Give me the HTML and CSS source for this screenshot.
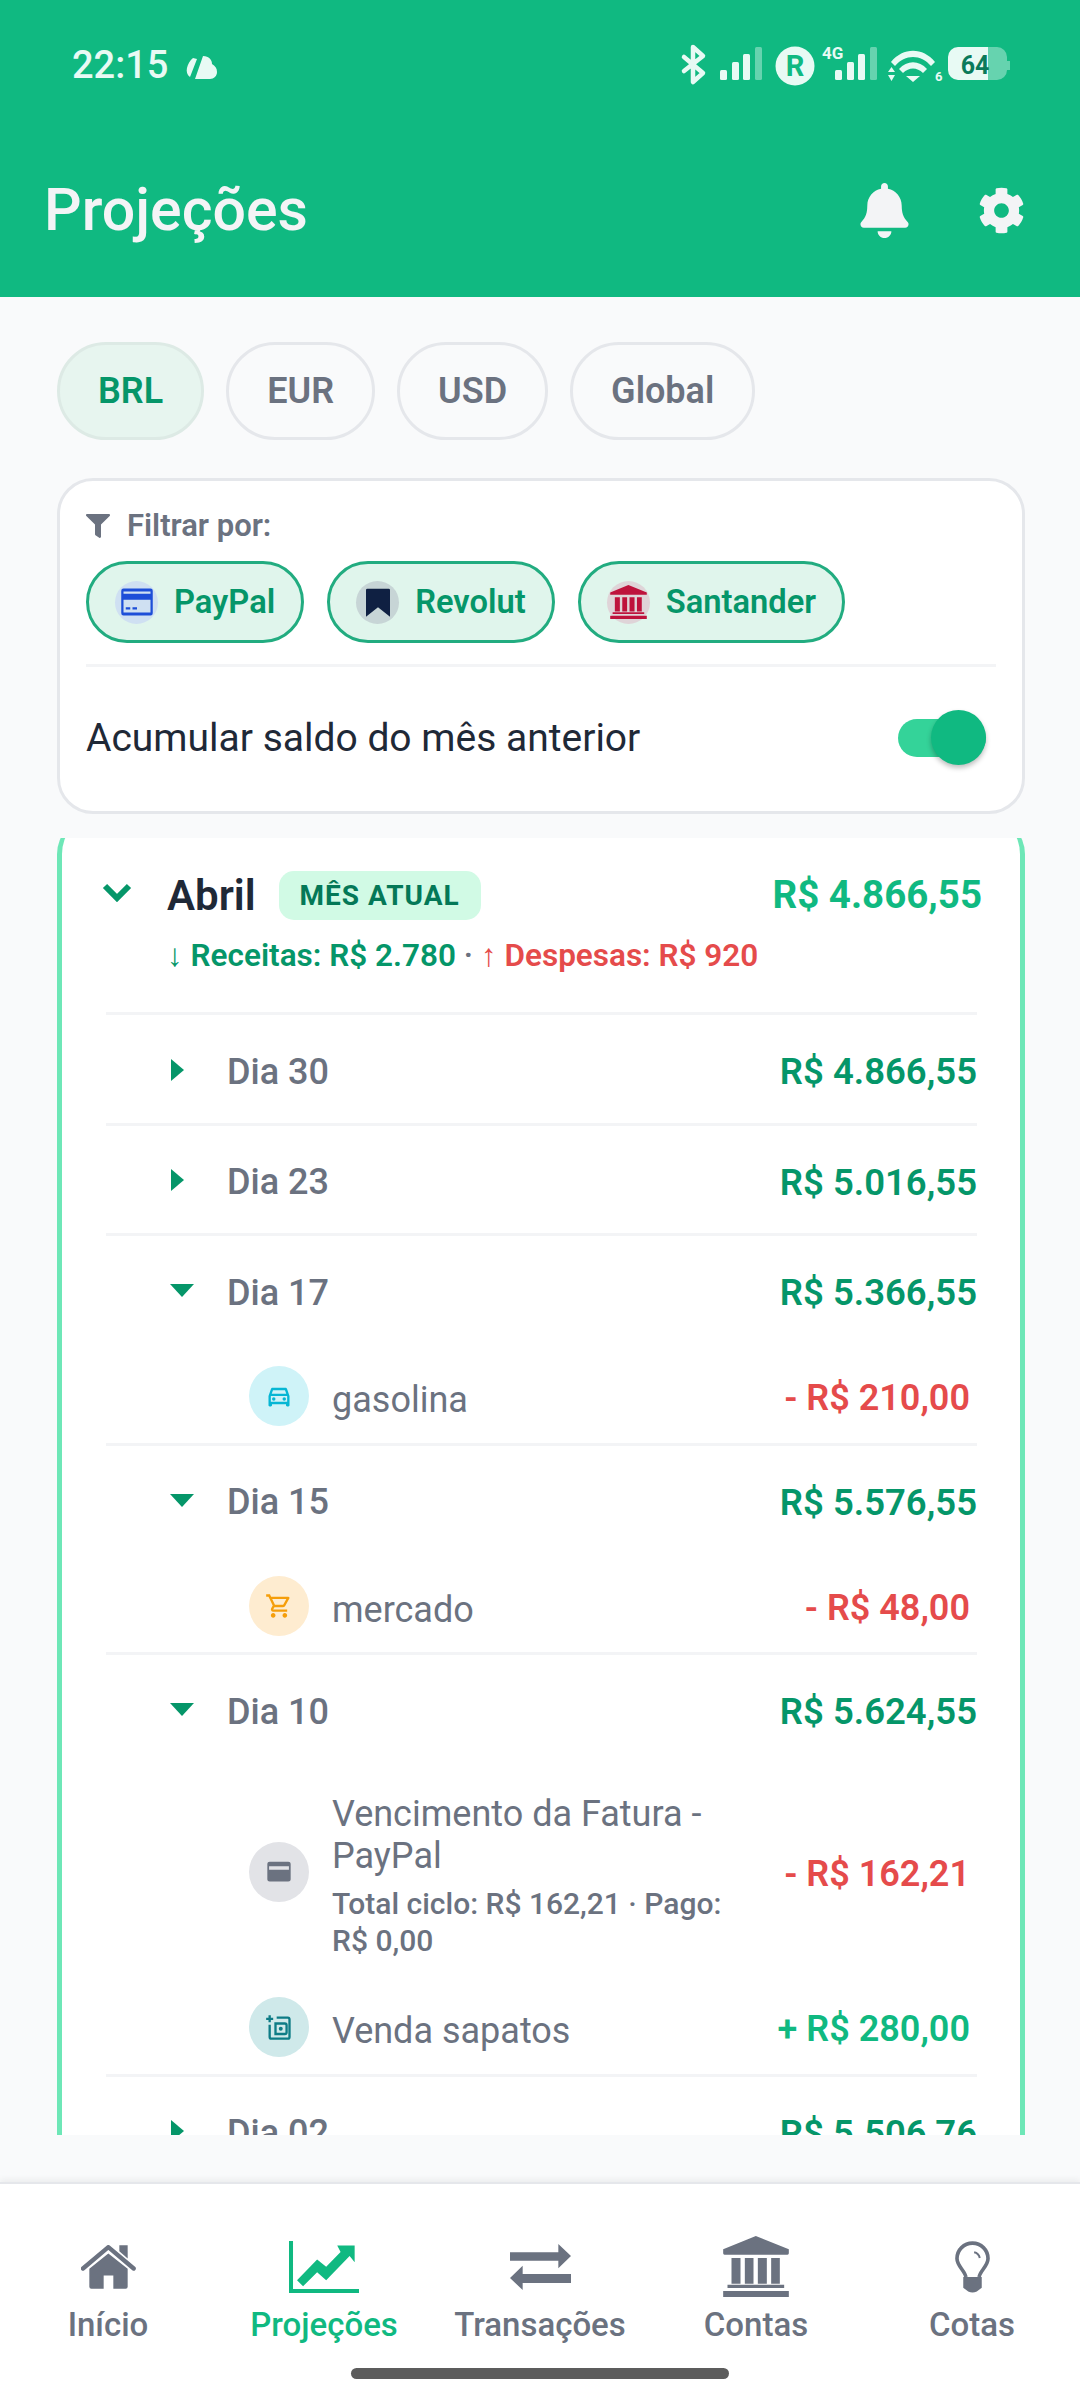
FILE: index.html
```html
<!DOCTYPE html>
<html lang="pt-BR">
<head>
<meta charset="utf-8">
<title>Projeções</title>
<link rel="stylesheet" href="styles.css">
</head>
<body>
<div class="app">
  <header class="header">
    <div class="status">
      <div class="status-left">
        <span class="clock">22:15</span>
        <svg class="weather" viewBox="0 0 33 23"><path d="M9 2 L13 3 L6 21 C0 17 3 7 9 2Z M19 0 C25 0 28 4 28 8 C31 10 33 12 33 16 C33 20 30 23 26 23 L11 23 Z" fill="#E8FAF4"/></svg>
      </div>
      <svg class="status-icons" viewBox="0 0 340 50">
        <path d="M9 17 L28 33 L18 42 L18 7 L28 16 L9 31" fill="none" stroke="#E8FAF4" stroke-width="4.5" stroke-linecap="round" stroke-linejoin="round"/>
        <g fill="#E8FAF4">
          <rect x="45" y="30" width="7" height="10" rx="1.5"/><rect x="57" y="22" width="7" height="18" rx="1.5"/><rect x="68" y="14" width="7" height="26" rx="1.5"/>
          <rect x="80" y="7" width="7" height="33" rx="1.5" opacity=".4"/>
          <circle cx="120" cy="26" r="19.5"/>
          <rect x="160" y="30" width="7" height="10" rx="1.5"/><rect x="172" y="22" width="7" height="18" rx="1.5"/><rect x="183" y="14" width="7" height="26" rx="1.5"/>
          <rect x="195" y="7" width="7" height="33" rx="1.5" opacity=".4"/>
          <path d="M216 22 C228 7 248 7 260 22 L256 26 C246 14 230 14 220 26Z M224 29 C232 20 244 20 252 29 L248 33 C242 27 234 27 228 33Z M231 36 L245 36 L238 42Z"/>
          <path d="M213 32 L220 32 L216.500 27Z M213 35 L220 35 L216.500 41Z"/>
          <path d="M273 17 a10 10 0 0 1 10 -10 h30 v33 h-30 a10 10 0 0 1 -10 -10Z"/>
          <path d="M313 7 h9 a10 10 0 0 1 10 10 v4 h3 v9 h-3 v0 a10 10 0 0 1 -10 10 h-9Z" opacity=".4"/>
        </g>
        <text class="st-r" x="120" y="36">R</text>
        <text class="st-4g" x="147" y="19">4G</text>
        <text class="st-6" x="260" y="41">6</text>
        <text class="st-bat" x="300" y="34">64</text>
      </svg>
    </div>
    <div class="titlebar">
      <h1 class="title">Projeções</h1>
      <div class="title-actions">
        <svg class="bell" viewBox="0 0 448 512"><path d="M224 512c35.320 0 63.970-28.650 63.970-64H160.030c0 35.350 28.650 64 63.970 64zm215.390-149.710c-19.320-20.760-55.470-51.990-55.470-154.290 0-77.700-54.480-139.900-127.940-155.160V32c0-17.670-14.320-32-31.980-32s-31.980 14.330-31.980 32v20.840C118.560 68.100 64.080 130.300 64.080 208c0 102.300-36.150 133.530-55.470 154.290-6 6.450-8.660 14.160-8.610 21.710.11 16.400 12.980 32 32.100 32h383.800c19.120 0 32-15.600 32.100-32 .05-7.550-2.610-15.270-8.610-21.710z"/></svg>
        <svg class="gear" viewBox="0 0 512 512"><path d="M487.400 315.700l-42.600-24.600c4.300-23.200 4.300-47 0-70.200l42.600-24.600c4.900-2.800 7.100-8.600 5.500-14-11.100-35.600-30-67.800-54.700-94.600-3.800-4.100-10-5.100-14.800-2.300L380.800 110c-17.900-15.400-38.500-27.300-60.800-35.100V25.800c0-5.600-3.900-10.500-9.400-11.700-36.700-8.200-74.300-7.800-109.200 0-5.500 1.200-9.400 6.100-9.400 11.700V75c-22.200 7.900-42.800 19.800-60.800 35.100L88.700 85.500c-4.900-2.800-11-1.900-14.800 2.300-24.700 26.700-43.600 58.900-54.700 94.600-1.700 5.400.6 11.200 5.500 14L67.300 221c-4.300 23.200-4.300 47 0 70.200l-42.600 24.600c-4.900 2.800-7.100 8.600-5.500 14 11.100 35.600 30 67.800 54.700 94.600 3.800 4.100 10 5.100 14.800 2.300l42.600-24.600c17.900 15.400 38.500 27.300 60.800 35.100v49.200c0 5.600 3.900 10.500 9.400 11.700 36.700 8.200 74.300 7.800 109.200 0 5.500-1.200 9.400-6.100 9.400-11.700v-49.200c22.200-7.900 42.800-19.800 60.800-35.100l42.600 24.600c4.900 2.800 11 1.900 14.800-2.300 24.700-26.700 43.600-58.900 54.700-94.600 1.500-5.500-.7-11.300-5.600-14.100zM256 336c-44.100 0-80-35.900-80-80s35.900-80 80-80 80 35.900 80 80-35.900 80-80 80z"/></svg>
      </div>
    </div>
  </header>

  <main class="main">
    <div class="pills">
      <button class="pill pill-active">BRL</button>
      <button class="pill">EUR</button>
      <button class="pill">USD</button>
      <button class="pill">Global</button>
    </div>

    <section class="filter-card">
      <div class="filter-label">
        <svg class="filter-icon" viewBox="0 0 512 512"><path d="M487.976 0H24.028C2.710 0-8.047 25.866 7.058 40.971L192 225.941V432c0 7.831 3.821 15.170 10.237 19.662l80 55.980C298.020 518.690 320 507.493 320 487.980V225.941l184.947-184.970C520.021 25.896 509.338 0 487.976 0z"/></svg>
        <span>Filtrar por:</span>
      </div>
      <div class="chips">
        <div class="chip">
          <span class="chip-icon chip-paypal"><svg class="chip-svg-card" viewBox="0 0 24 24"><path fill-rule="evenodd" fill="#1D4ED8" d="M3 3h18a1.500 1.500 0 0 1 1.500 1.500v15A1.500 1.500 0 0 1 21 21H3a1.500 1.500 0 0 1-1.500-1.500v-15A1.500 1.500 0 0 1 3 3zM3 5v1.500h18V5zM3 10.500V19h18v-8.500zM4.500 15.500h3v1.500h-3zM9 15.500h3v1.500H9z"/></svg></span>
          <span>PayPal</span>
        </div>
        <div class="chip">
          <span class="chip-icon chip-revolut"><svg class="chip-svg" viewBox="0 0 24 24"><path fill="#0F2042" d="M4 2h16a1 1 0 0 1 1 1v20l-9-7-9 7V3a1 1 0 0 1 1-1z"/></svg></span>
          <span>Revolut</span>
        </div>
        <div class="chip">
          <span class="chip-icon chip-santander"><svg class="chip-svg-bank" viewBox="0 0 197 183"><path fill="#BE123C" d="M0 40 98 0l99 40v12H0zM25 66h27v77H25zM65 66h26v77H65zM104 66h27v77h-27zM144 66h26v77h-26zM13 146h170v10H13zM0 165h197v18H0z"/></svg></span>
          <span>Santander</span>
        </div>
      </div>
      <div class="filter-divider"></div>
      <div class="toggle-row">
        <span class="toggle-label">Acumular saldo do mês anterior</span>
        <span class="toggle"><span class="toggle-thumb"></span></span>
      </div>
    </section>

    <div class="scroller">
      <section class="month">
        <div class="month-head">
          <svg class="chevron" viewBox="0 0 30 19"><path d="M3 3 L15 15 L27 3" fill="none" stroke="#059669" stroke-width="6"/></svg>
          <span class="month-name">Abril</span>
          <span class="badge">MÊS ATUAL</span>
          <span class="month-total">R$ 4.866,55</span>
        </div>
        <div class="month-sub"><span class="in">↓ Receitas: R$ 2.780</span> <span class="dot">·</span> <span class="out">↑ Despesas: R$ 920</span></div>

        <div class="day">
          <div class="day-head"><span class="caret-box"><i class="caret-right"></i></span><span class="day-name">Dia 30</span><span class="day-total">R$ 4.866,55</span></div>
        </div>
        <div class="day">
          <div class="day-head"><span class="caret-box"><i class="caret-right"></i></span><span class="day-name">Dia 23</span><span class="day-total">R$ 5.016,55</span></div>
        </div>
        <div class="day">
          <div class="day-head"><span class="caret-box"><i class="caret-down"></i></span><span class="day-name">Dia 17</span><span class="day-total">R$ 5.366,55</span></div>
          <div class="tx">
            <span class="tx-icon tx-car"><svg class="tx-svg" viewBox="0 0 24 24"><path fill="#06B6D4" d="M18.920 6.010C18.720 5.420 18.160 5 17.500 5h-11c-.66 0-1.210.42-1.420 1.010L3 12v8c0 .55.45 1 1 1h1c.55 0 1-.45 1-1v-1h12v1c0 .55.45 1 1 1h1c.55 0 1-.45 1-1v-8l-2.080-5.990zM6.850 7h10.290l1.080 3.110H5.770L6.850 7zM19 17H5v-5h14v5z"/><circle fill="#06B6D4" cx="7.500" cy="14.500" r="1.500"/><circle fill="#06B6D4" cx="16.500" cy="14.500" r="1.500"/></svg></span>
            <div class="tx-text"><div class="tx-name">gasolina</div></div>
            <span class="tx-amount neg">- R$ 210,00</span>
          </div>
        </div>
        <div class="day">
          <div class="day-head"><span class="caret-box"><i class="caret-down"></i></span><span class="day-name">Dia 15</span><span class="day-total">R$ 5.576,55</span></div>
          <div class="tx">
            <span class="tx-icon tx-cart"><svg class="tx-svg" viewBox="0 0 24 24"><path fill="#F59E0B" d="M15.550 13c.75 0 1.410-.41 1.750-1.030l3.580-6.490c.37-.66-.11-1.480-.87-1.480H5.210l-.94-2H1v2h2l3.600 7.590-1.350 2.440C4.520 15.370 5.480 17 7 17h12v-2H7l1.100-2h7.450zM6.160 6h12.150l-2.760 5H8.530L6.160 6zM7 18c-1.100 0-1.990.9-1.990 2S5.900 22 7 22s2-.9 2-2-.9-2-2-2zm10 0c-1.100 0-1.990.9-1.990 2s.89 2 1.990 2 2-.9 2-2-.9-2-2-2z"/></svg></span>
            <div class="tx-text"><div class="tx-name">mercado</div></div>
            <span class="tx-amount neg">- R$ 48,00</span>
          </div>
        </div>
        <div class="day">
          <div class="day-head"><span class="caret-box"><i class="caret-down"></i></span><span class="day-name">Dia 10</span><span class="day-total">R$ 5.624,55</span></div>
          <div class="tx">
            <span class="tx-icon tx-bill"><svg class="tx-svg" viewBox="0 0 24 24"><path fill="#6B7280" fill-rule="evenodd" d="M4 2h16a2 2 0 0 1 2 2v16a2 2 0 0 1-2 2H4a2 2 0 0 1-2-2V4a2 2 0 0 1 2-2zM3.500 6.500v3.500h17V6.500z" transform="translate(0 1.500) scale(1 .85)"/></svg></span>
            <div class="tx-text">
              <div class="tx-name">Vencimento da Fatura - PayPal</div>
              <div class="tx-note">Total ciclo: R$ 162,21 · Pago: R$ 0,00</div>
            </div>
            <span class="tx-amount neg">- R$ 162,21</span>
          </div>
          <div class="tx">
            <span class="tx-icon tx-wallet"><svg class="tx-svg" viewBox="0 0 24 24"><path fill="none" stroke="#0E7C86" stroke-width="2" d="M1 5h6M4 2v6M4 10v10.500a1.500 1.500 0 0 0 1.500 1.500h14a1.500 1.500 0 0 0 1.500-1.500V5.500A1.500 1.500 0 0 0 19.500 4H10M9 9h8a1.500 1.500 0 0 1 1.500 1.500v6A1.500 1.500 0 0 1 17 18H9z"/><circle fill="#0E7C86" cx="13.500" cy="13.500" r="1.700"/></svg></span>
            <div class="tx-text"><div class="tx-name">Venda sapatos</div></div>
            <span class="tx-amount pos">+ R$ 280,00</span>
          </div>
        </div>
        <div class="day">
          <div class="day-head"><span class="caret-box"><i class="caret-right"></i></span><span class="day-name">Dia 02</span><span class="day-total">R$ 5.506,76</span></div>
        </div>
      </section>
    </div>
  </main>

  <nav class="nav">
    <div class="nav-items">
      <div class="nav-item">
        <div class="nav-icon"><svg class="ic-home" viewBox="0 0 165 131"><path fill="#6B7280" d="M115 0h25v40l-25-22z"/><path fill="none" stroke="#6B7280" stroke-width="13" stroke-linecap="round" stroke-linejoin="round" d="M6 70 82 6l76 64"/><path fill="#6B7280" d="M82 25 140 71v54a6 6 0 0 1-6 6H97V91H68v40H31a6 6 0 0 1-6-6V71z"/></svg></div>
        <span class="nav-label">Início</span>
      </div>
      <div class="nav-item nav-active">
        <div class="nav-icon"><svg class="ic-chart" viewBox="0 0 209 155"><path fill="#10B981" d="M0 0h12v143h197v12H0zM24 117 84 55l27 22 43-44-10-20h52v50l-15-18-70 72-27-24-42 42z"/></svg></div>
        <span class="nav-label">Projeções</span>
      </div>
      <div class="nav-item">
        <div class="nav-icon"><svg class="ic-swap" viewBox="0 0 183 138"><path fill="#6B7280" d="M0 25h145V0l38 36-38 37V50H0zM183 90v27H38v21L0 102l38-37v25z"/></svg></div>
        <span class="nav-label">Transações</span>
      </div>
      <div class="nav-item">
        <div class="nav-icon"><svg class="ic-bank" viewBox="0 0 197 183"><path fill="#6B7280" d="M0 40 98 0l99 40v12q0 4-4 4H4q-4 0-4-4zM25 66h27v77H25zM65 66h26v77H65zM104 66h27v77h-27zM144 66h26v77h-26zM13 146h170v10H13zM0 165h197v18H0z"/></svg></div>
        <span class="nav-label">Contas</span>
      </div>
      <div class="nav-item">
        <div class="nav-icon"><svg class="ic-bulb" viewBox="0 0 106 155"><path fill="none" stroke="#6B7280" stroke-width="11" d="M33 108C30 88 6 75 6 52a47 47 0 0 1 94 0C100 75 76 88 73 108"/><path fill="none" stroke="#6B7280" stroke-width="6" d="M58 33q14 3 17 17"/><path fill="#6B7280" d="M25 108h56v32l-15 12q-13 6-26 0l-15-12z"/></svg></div>
        <span class="nav-label">Cotas</span>
      </div>
    </div>
    <div class="home-bar"></div>
  </nav>
</div>
</body>
</html>
```
FILE: styles.css
```css
* { box-sizing: border-box; }
html, body { margin: 0; padding: 0; }
body { font-family: Roboto, "Liberation Sans", sans-serif; background: #F9FAFB; }
.app { width: 1080px; height: 2400px; display: flex; flex-direction: column; overflow: hidden; background: #F9FAFB; }

.header { height: 297px; background: #10B981; flex: none; padding-top: 40px; }
.status { display: flex; justify-content: space-between; align-items: center; height: 50px; padding: 0 65px 0 72px; }
.status-left { display: flex; align-items: center; gap: 16px; }
.clock { font-size: 38px; font-weight: 500; color: #E8FAF4; line-height: 50px; }
.weather { width: 33px; height: 23px; margin-top: 4px; }
.status-icons { width: 340px; height: 50px; }
.st-r { font: 700 29px Roboto, sans-serif; fill: #10B981; text-anchor: middle; }
.st-4g { font: 700 17px Roboto, sans-serif; fill: #E8FAF4; }
.st-6 { font: 700 13px Roboto, sans-serif; fill: #E8FAF4; }
.st-bat { font: 700 25px Roboto, sans-serif; fill: #0A7A5A; text-anchor: middle; }

.titlebar { display: flex; align-items: center; justify-content: space-between; height: 80px; margin-top: 80px; padding: 0 55px 0 44px; }
.title { margin: 0; font-size: 59px; font-weight: 500; color: #F3F4F6; line-height: 80px; }
.title-actions { display: flex; align-items: center; gap: 68px; }
.bell { width: 51px; height: 55px; fill: #F3F4F6; }
.gear { width: 47px; height: 47px; fill: #F3F4F6; }

.main { flex: 1; min-height: 0; display: flex; flex-direction: column; padding: 45px 55px 47px 57px; }
.pills { display: flex; gap: 22px; flex: none; }
.pill { height: 98px; padding: 0 38px; border-radius: 49px; border: 3px solid #E5E7EB; background: transparent; font-family: inherit; font-size: 36px; font-weight: 600; color: #6B7280; }
.pill-active { background: #E7F5EF; border-color: #DDEAE5; color: #059669; }

.filter-card { flex: none; height: 336px; margin-top: 38px; background: #fff; border: 3px solid #E5E7EB; border-radius: 36px; padding: 28px 26px 0; display: flex; flex-direction: column; }
.filter-label { display: flex; align-items: center; gap: 17px; height: 34px; font-size: 31px; font-weight: 600; color: #6B7280; line-height: 34px; }
.filter-icon { width: 24px; height: 24px; fill: #6B7280; }
.chips { display: flex; gap: 23px; margin-top: 18px; }
.chip { height: 82px; display: flex; align-items: center; gap: 16px; padding: 0 26px 0 26px; border: 3px solid #22AC80; border-radius: 41px; background: #E0F5EC; font-size: 32.7px; font-weight: 600; color: #059669; }
.chip-icon { width: 43px; height: 43px; border-radius: 50%; display: flex; align-items: center; justify-content: center; flex: none; }
.chip-svg { width: 32px; height: 32px; }
.chip-svg-card { width: 36px; height: 36px; }
.chip-svg-bank { width: 37px; height: 34px; }
.chip-paypal { background: #CFE0F2; }
.chip-revolut { background: #C7D5D6; }
.chip-santander { background: #DFD4D8; }
.filter-divider { height: 3px; background: #F3F4F6; margin-top: 21px; }
.toggle-row { flex: 1; display: flex; align-items: center; justify-content: space-between; padding-right: 10px; padding-bottom: 2px; }
.toggle-label { font-size: 39px; color: #1F2937; }
.toggle { position: relative; width: 88px; height: 38px; border-radius: 19px; background: #34D399; }
.toggle-thumb { position: absolute; right: 0; top: -9px; width: 55px; height: 55px; border-radius: 50%; background: #10B981; box-shadow: 0 3px 5px rgba(0,0,0,.25); }

.scroller { flex: 1; min-height: 0; margin-top: 24px; overflow: hidden; }
.month { margin-top: -20px; background: #fff; border: solid #6EE7B7; border-width: 0 5px; border-radius: 36px; padding-top: 53px; }
.month-head { display: flex; align-items: center; height: 49px; padding-right: 38px; }
.chevron { width: 30px; height: 19px; margin: -6px 35px 0 40px; }
.month-name { font-size: 42px; font-weight: 600; color: #1F2937; }
.badge { margin-left: 23px; height: 49px; padding: 0 21px; border-radius: 15px; background: #D1FAE5; color: #047857; font-size: 28px; font-weight: 700; letter-spacing: 1px; line-height: 49px; }
.month-total { margin-left: auto; margin-top: -2px; font-size: 38.5px; font-weight: 700; color: #10B981; }
.month-sub { margin: 17px 0 37px 105px; font-size: 31.5px; font-weight: 600; line-height: 38px; color: #6B7280; }
.in { color: #059669; }
.out { color: #E54B4B; }

.day { margin: 0 43px 0 44px; border-top: 3px solid #F3F4F6; }
.day-head { display: flex; align-items: center; height: 107.5px; padding-top: 6px; font-size: 36px; }
.caret-box { width: 121px; padding-left: 65px; flex: none; display: flex; margin-top: -4px; }
.caret-right { width: 0; height: 0; border-left: 13px solid #059669; border-top: 11px solid transparent; border-bottom: 11px solid transparent; }
.caret-down { width: 0; height: 0; margin-left: -1px; border-top: 13px solid #059669; border-left: 12px solid transparent; border-right: 12px solid transparent; }
.day-name { font-weight: 500; color: #6B7280; }
.day-total { margin-left: auto; font-size: 36.5px; font-weight: 600; color: #059669; }

.tx { display: flex; align-items: center; min-height: 99px; padding: 6px 7px 0 143px; gap: 23px; }
.tx-icon { flex: none; width: 60px; height: 60px; border-radius: 50%; display: flex; align-items: center; justify-content: center; }
.tx-svg { width: 28px; height: 28px; }
.tx-car { background: #CFF3F8; }
.tx-cart { background: #FEECD0; }
.tx-bill { background: #E2E3E7; }
.tx-wallet { background: #CFE9EA; }
.tx-text { flex: 1; min-width: 0; padding: 20px 9px 16px 0; }
.tx-name { padding-top: 4px; font-size: 36px; line-height: 42px; color: #6B7280; }
.tx-name + .tx-note { margin-top: 8px; }
.tx-note { font-size: 30px; font-weight: 500; line-height: 37px; color: #6B7280; }
.tx-amount { flex: none; padding-top: 4px; font-size: 36px; font-weight: 600; }
.neg { color: #E54B4B; }
.pos { color: #10B981; }

.nav { flex: none; height: 218px; background: #fff; border-top: 2px solid #E5E7EB; box-shadow: 0 -3px 6px rgba(0,0,0,.05); padding-top: 52px; display: flex; flex-direction: column; align-items: center; }
.nav-items { display: grid; grid-template-columns: repeat(5, 216px); width: 1080px; }
.nav-item { display: flex; flex-direction: column; align-items: center; color: #6B7280; }
.nav-active { color: #10B981; }
.nav-icon { height: 61px; display: flex; align-items: center; justify-content: center; }
.nav-label { margin-top: 10px; font-size: 33px; font-weight: 500; line-height: 36px; }
.ic-home { width: 55px; height: 44px; }
.ic-chart { width: 70px; height: 52px; }
.ic-swap { width: 61px; height: 46px; }
.ic-bank { width: 66px; height: 61px; }
.ic-bulb { width: 35px; height: 52px; }
.home-bar { width: 378px; height: 11px; margin-top: 25px; border-radius: 6px; background: #5C5C5C; }
```
